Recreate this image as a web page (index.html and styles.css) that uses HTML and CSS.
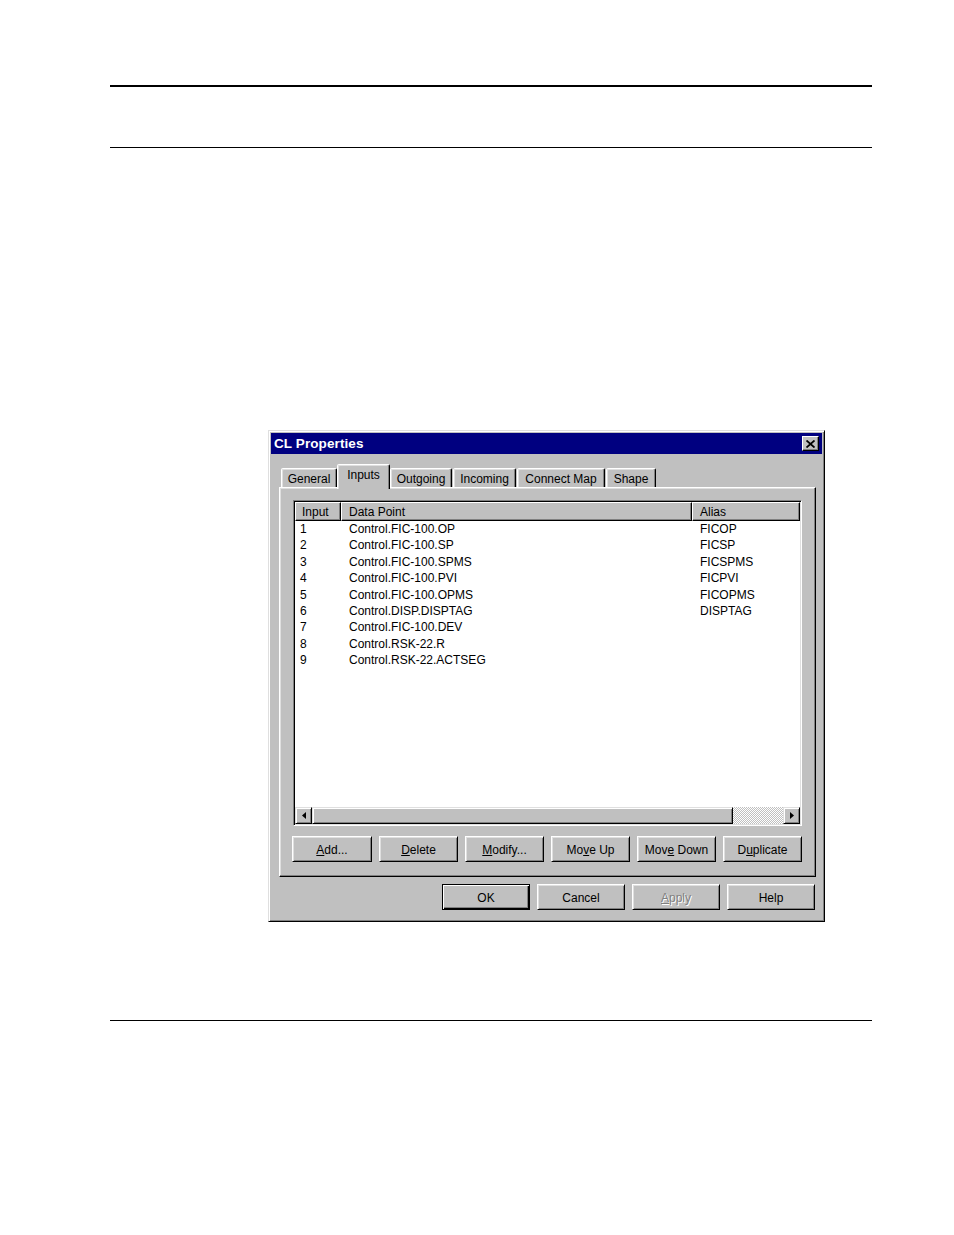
FILE: index.html
```html
<!DOCTYPE html>
<html>
<head>
<meta charset="utf-8">
<title>CL Properties</title>
<link rel="stylesheet" href="styles.css">
</head>
<body>
<div class="page">
  <div class="rule rule-top"></div>
  <div class="rule rule-mid"></div>

  <div class="dialog">
    <div class="titlebar">
      <span class="title">CL Properties</span>
      <span class="close-btn">
        <svg width="9" height="8" viewBox="0 0 9 8"><path d="M0.5 0.5 L8.5 7.5 M8.5 0.5 L0.5 7.5" stroke="#000" stroke-width="1.8" fill="none"/></svg>
      </span>
    </div>

    <div class="dialog-body">
      <div class="tabs">
        <div class="tab w-general">General</div>
        <div class="tab tab-active w-inputs">Inputs</div>
        <div class="tab w-outgoing">Outgoing</div>
        <div class="tab w-incoming">Incoming</div>
        <div class="tab w-connect">Connect Map</div>
        <div class="tab w-shape">Shape</div>
      </div>

      <div class="panel">
        <div class="list">
          <div class="list-header">
            <div class="hcell col-input">Input</div>
            <div class="hcell col-point">Data Point</div>
            <div class="hcell col-alias">Alias</div>
          </div>
          <div class="list-rows">
            <div class="row"><span class="cell col-input">1</span><span class="cell col-point">Control.FIC-100.OP</span><span class="cell col-alias">FICOP</span></div>
            <div class="row"><span class="cell col-input">2</span><span class="cell col-point">Control.FIC-100.SP</span><span class="cell col-alias">FICSP</span></div>
            <div class="row"><span class="cell col-input">3</span><span class="cell col-point">Control.FIC-100.SPMS</span><span class="cell col-alias">FICSPMS</span></div>
            <div class="row"><span class="cell col-input">4</span><span class="cell col-point">Control.FIC-100.PVI</span><span class="cell col-alias">FICPVI</span></div>
            <div class="row"><span class="cell col-input">5</span><span class="cell col-point">Control.FIC-100.OPMS</span><span class="cell col-alias">FICOPMS</span></div>
            <div class="row"><span class="cell col-input">6</span><span class="cell col-point">Control.DISP.DISPTAG</span><span class="cell col-alias">DISPTAG</span></div>
            <div class="row"><span class="cell col-input">7</span><span class="cell col-point">Control.FIC-100.DEV</span><span class="cell col-alias"></span></div>
            <div class="row"><span class="cell col-input">8</span><span class="cell col-point">Control.RSK-22.R</span><span class="cell col-alias"></span></div>
            <div class="row"><span class="cell col-input">9</span><span class="cell col-point">Control.RSK-22.ACTSEG</span><span class="cell col-alias"></span></div>
          </div>
          <div class="hscroll">
            <div class="sbtn">
              <svg width="4" height="7" viewBox="0 0 4 7"><path d="M4 0 L0 3.5 L4 7 Z" fill="#000"/></svg>
            </div>
            <div class="thumb"></div>
            <div class="track"></div>
            <div class="sbtn">
              <svg width="4" height="7" viewBox="0 0 4 7"><path d="M0 0 L4 3.5 L0 7 Z" fill="#000"/></svg>
            </div>
          </div>
        </div>

        <div class="list-buttons">
          <div class="btn btn-small"><span><u>A</u>dd...</span></div>
          <div class="btn btn-small"><span><u>D</u>elete</span></div>
          <div class="btn btn-small"><span><u>M</u>odify...</span></div>
          <div class="btn btn-small"><span>Mo<u>v</u>e Up</span></div>
          <div class="btn btn-small"><span>Mov<u>e</u> Down</span></div>
          <div class="btn btn-small"><span>D<u>u</u>plicate</span></div>
        </div>
      </div>

      <div class="dialog-buttons">
        <div class="btn btn-big btn-default"><span>OK</span></div>
        <div class="btn btn-big"><span>Cancel</span></div>
        <div class="btn btn-big btn-disabled"><span><u>A</u>pply</span></div>
        <div class="btn btn-big"><span>Help</span></div>
      </div>
    </div>
  </div>

  <div class="rule rule-bottom"></div>
</div>
</body>
</html>
```

FILE: styles.css
```css
html, body {
  margin: 0;
  padding: 0;
  background: #ffffff;
}

body {
  font-family: "Liberation Sans", Arial, sans-serif;
  font-size: 12px;
  color: #000;
}

.page {
  width: 954px;
  height: 1235px;
  overflow: hidden;
  display: flex;
  flex-direction: column;
}

.rule {
  margin-left: 110px;
  width: 762px;
  background: #000;
  flex: none;
}

.rule-top {
  margin-top: 85px;
  height: 2px;
}

.rule-mid {
  margin-top: 60px;
  height: 1px;
}

.rule-bottom {
  margin-top: 98px;
  height: 1px;
}

/* ---------- dialog ---------- */
.dialog {
  flex: none;
  margin-top: 282px;
  margin-left: 268px;
  width: 557px;
  height: 492px;
  box-sizing: border-box;
  background: #c0c0c0;
  border: 1px solid;
  border-color: #dfdfdf #000 #000 #dfdfdf;
  box-shadow: inset 1px 1px 0 #fff, inset -1px -1px 0 #808080;
  padding: 2px;
  display: flex;
  flex-direction: column;
}

.titlebar {
  height: 21px;
  background: #000080;
  display: flex;
  align-items: center;
  justify-content: space-between;
  padding: 0 3px 0 3px;
  flex: none;
}

.title {
  color: #fff;
  font-weight: bold;
  font-size: 13.5px;
  letter-spacing: 0.1px;
}

.close-btn {
  width: 17px;
  height: 15px;
  box-sizing: border-box;
  background: #c0c0c0;
  border: 1px solid;
  border-color: #fff #000 #000 #fff;
  box-shadow: inset -1px -1px 0 #808080;
  display: flex;
  align-items: center;
  justify-content: center;
}

.dialog-body {
  flex: 1;
  padding: 10px 6px 0 8px;
  display: flex;
  flex-direction: column;
}

/* ---------- tabs ---------- */
.tabs {
  height: 23px;
  display: flex;
  align-items: flex-end;
  gap: 1px;
  padding-left: 2px;
  position: relative;
  z-index: 2;
}

.tab {
  height: 19px;
  box-sizing: border-box;
  border: 1px solid;
  border-bottom: none;
  border-color: #fff #000 transparent #fff;
  box-shadow: inset -1px 0 0 #808080, inset 1px 1px 0 #dfdfdf;
  border-radius: 2px 2px 0 0;
  display: flex;
  align-items: center;
  justify-content: center;
  padding-top: 1px;
  background: #c0c0c0;
}

.tab-active {
  height: 25px;
  margin: 0 -1px -2px -1px;
  align-items: flex-start;
  padding-top: 3px;
}

.w-general { width: 56px; }
.w-inputs { width: 53px; }
.w-outgoing { width: 62px; }
.w-incoming { width: 63px; }
.w-connect { width: 88px; }
.w-shape { width: 50px; }

/* ---------- panel ---------- */
.panel {
  width: 537px;
  height: 390px;
  box-sizing: border-box;
  border: 1px solid;
  border-color: #fff #000 #000 #fff;
  box-shadow: inset -1px -1px 0 #808080, inset 1px 1px 0 #dfdfdf;
  padding: 12px 13px 13px 13px;
  display: flex;
  flex-direction: column;
  flex: none;
}

.list {
  width: 509px;
  height: 326px;
  box-sizing: border-box;
  background: #fff;
  border: 1px solid;
  border-color: #808080 #fff #fff #808080;
  box-shadow: inset 1px 1px 0 #000, inset -1px -1px 0 #dfdfdf;
  padding: 1px;
  display: flex;
  flex-direction: column;
  flex: none;
}

.list-header {
  height: 19px;
  display: flex;
  flex: none;
  background: #c0c0c0;
}

.hcell {
  box-sizing: border-box;
  height: 19px;
  border: 1px solid;
  border-color: #fff #000 #000 #fff;
  box-shadow: inset -1px -1px 0 #808080;
  padding: 0 6px;
  display: flex;
  align-items: center;
  white-space: nowrap;
}

.hcell.col-input { width: 46px; }
.hcell.col-point { width: 351px; padding-left: 7px; }
.hcell.col-alias { flex: 1; padding-left: 7px; }

.list-rows {
  flex: 1;
  display: flex;
  flex-direction: column;
}

.row {
  display: flex;
  height: 16.4px;
  line-height: 16.4px;
  white-space: nowrap;
}

.cell {
  box-sizing: border-box;
  display: block;
}

.cell.col-input { width: 46px; padding-left: 5px; }
.cell.col-point { width: 351px; padding-left: 8px; }
.cell.col-alias { flex: 1; padding-left: 8px; }

.hscroll {
  height: 17px;
  display: flex;
  flex: none;
}

.sbtn, .thumb {
  box-sizing: border-box;
  height: 17px;
  background: #c0c0c0;
  border: 1px solid;
  border-color: #dfdfdf #000 #000 #dfdfdf;
  box-shadow: inset 1px 1px 0 #fff, inset -1px -1px 0 #808080;
}

.sbtn {
  width: 17px;
  display: flex;
  align-items: center;
  justify-content: center;
}

.thumb {
  width: 421px;
}

.track {
  flex: 1;
  background-color: #e6e6e6;
  background-image: repeating-conic-gradient(#c0c0c0 0 25%, #ffffff 0 50%);
  background-size: 2px 2px;
}

/* ---------- buttons ---------- */
.list-buttons {
  margin-top: 10px;
  display: flex;
  gap: 7px;
  padding-left: 0;
}

.btn {
  box-sizing: border-box;
  height: 26px;
  background: #c0c0c0;
  border: 1px solid;
  border-color: #fff #000 #000 #fff;
  box-shadow: inset 1px 1px 0 #dfdfdf, inset -1px -1px 0 #808080;
  display: flex;
  align-items: center;
  justify-content: center;
  white-space: nowrap;
  flex: none;
}

.btn span {
  padding-top: 1px;
}

.btn u {
  text-decoration: underline;
  text-underline-offset: 1px;
}

.btn-small {
  width: 79px;
}

.list-buttons .btn-small:first-child {
  margin-left: -1px;
  width: 80px;
}

.dialog-buttons {
  margin-top: 7px;
  display: flex;
  justify-content: flex-end;
  gap: 7px;
  width: 536px;
}

.btn-big {
  width: 88px;
}

.btn-default {
  border: 1px solid #000;
  box-shadow: inset 1px 1px 0 #fff, inset -1px -1px 0 #000, inset -2px -2px 0 #808080;
}

.btn-disabled {
  color: #808080;
  text-shadow: 1px 1px 0 #fff;
}
```
